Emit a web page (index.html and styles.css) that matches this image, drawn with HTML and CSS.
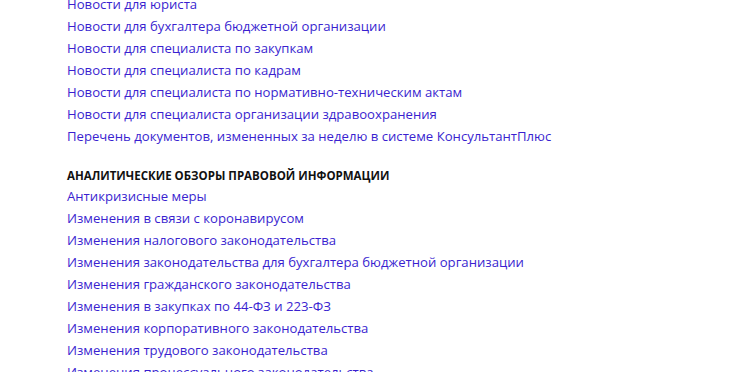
FILE: index.html
```html
<!DOCTYPE html>
<html lang="ru">
<head>
    <meta charset="UTF-8">
    <title>Новости и обзоры</title>
    <link rel="stylesheet" href="styles.css">
</head>
<body>
    <div class="page">
        <ul class="links">
            <li><a href="#">Новости для юриста</a></li>
            <li><a href="#">Новости для бухгалтера бюджетной организации</a></li>
            <li><a href="#">Новости для специалиста по закупкам</a></li>
            <li><a href="#">Новости для специалиста по кадрам</a></li>
            <li><a href="#">Новости для специалиста по нормативно-техническим актам</a></li>
            <li><a href="#">Новости для специалиста организации здравоохранения</a></li>
            <li><a href="#">Перечень документов, измененных за неделю в системе КонсультантПлюс</a></li>
        </ul>

        <h3 class="section-title">Аналитические обзоры правовой информации</h3>
        <ul class="links">
            <li><a href="#">Антикризисные меры</a></li>
            <li><a href="#">Изменения в связи с коронавирусом</a></li>
            <li><a href="#">Изменения налогового законодательства</a></li>
            <li><a href="#">Изменения законодательства для бухгалтера бюджетной организации</a></li>
            <li><a href="#">Изменения гражданского законодательства</a></li>
            <li><a href="#">Изменения в закупках по 44-ФЗ и 223-ФЗ</a></li>
            <li><a href="#">Изменения корпоративного законодательства</a></li>
            <li><a href="#">Изменения трудового законодательства</a></li>
            <li><a href="#">Изменения процессуального законодательства</a></li>
        </ul>
    </div>
</body>
</html>
```

FILE: styles.css
```css
body {
    margin: 0;
    background: #fff;
    font-family: 'Open Sans', 'Noto Sans', sans-serif;
    overflow: hidden;
}

.page {
    padding-left: 67px;
    margin-top: -7px;
}

.links {
    list-style: none;
    margin: 0;
    padding: 0;
}

.links li {
    height: 22px;
    line-height: 22px;
    font-size: 13.15px;
}

.links a {
    color: #3a1fd0;
    text-decoration: none;
    white-space: nowrap;
}

.section-title {
    margin: 22px 0 2px;
    font-size: 11.5px;
    line-height: 14px;
    font-weight: 700;
    text-transform: uppercase;
    color: #111;
}
```
